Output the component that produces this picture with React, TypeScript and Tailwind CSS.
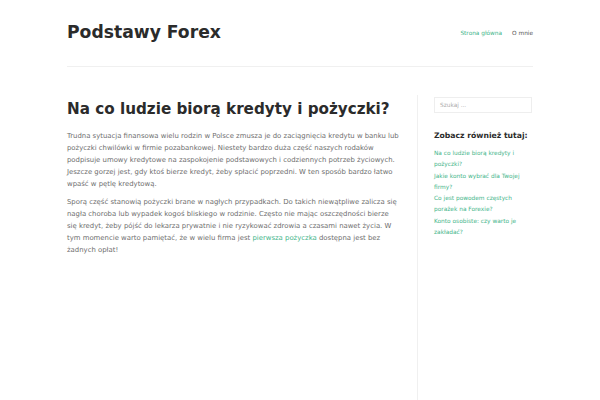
const links = [
  ["Na co ludzie biorą kredyty i", "pożyczki?"],
  ["Jakie konto wybrać dla Twojej", "firmy?"],
  ["Co jest powodem częstych", "porażek na Forexie?"],
  ["Konto osobiste: czy warto je", "zakładać?"],
];

export default function App() {
  return (
    <div className="flex h-screen flex-col bg-white font-['DejaVu_Sans',sans-serif] text-[#6e6e6e]">
      <div className="mx-auto flex w-[466px] flex-1 flex-col">
        <header className="flex h-[67px] shrink-0 items-center justify-between border-b border-[#f0f0f0]">
          <h1 className="text-[17.2px] leading-none font-bold text-[#2b2b2b]">Podstawy Forex</h1>
          <nav className="flex gap-[10px] text-[5.8px]">
            <a className="text-[#3fb58a]">Strona główna</a>
            <a className="text-[#555]">O mnie</a>
          </nav>
        </header>

        <main className="mt-[28px] flex flex-1">
          <article className="w-[334px] shrink-0 pt-[5px]">
            <h2 className="text-[15.2px] leading-[18px] font-bold whitespace-nowrap text-[#2b2b2b]">
              Na co ludzie biorą kredyty i pożyczki?
            </h2>
            <div className="mt-[12px] text-[6.9px] leading-[12px] whitespace-nowrap">
              <p>
                Trudna sytuacja finansowa wielu rodzin w Polsce zmusza je do zaciągnięcia kredytu w banku lub
                <br />
                pożyczki chwilówki w firmie pozabankowej. Niestety bardzo duża część naszych rodaków
                <br />
                podpisuje umowy kredytowe na zaspokojenie podstawowych i codziennych potrzeb życiowych.
                <br />
                Jeszcze gorzej jest, gdy ktoś bierze kredyt, żeby spłacić poprzedni. W ten sposób bardzo łatwo
                <br />
                wpaść w pętlę kredytową.
              </p>
              <p className="mt-[6px]">
                Sporą część stanowią pożyczki brane w nagłych przypadkach. Do takich niewątpliwe zalicza się
                <br />
                nagła choroba lub wypadek kogoś bliskiego w rodzinie. Często nie mając oszczędności bierze
                <br />
                się kredyt, żeby pójść do lekarza prywatnie i nie ryzykować zdrowia a czasami nawet życia. W
                <br />
                tym momencie warto pamiętać, że w wielu firma jest{" "}
                <a className="text-[#3fb58a]">pierwsza pożyczka</a> dostępna jest bez
                <br />
                żadnych opłat!
              </p>
            </div>
          </article>

          <aside className="ml-[16px] flex-1 border-l border-[#f0f0f0] pt-[2px] pl-[16px]">
            <div className="flex h-[16px] w-[98px] items-center border border-[#eee] px-[5px] text-[5.8px] text-[#aaa]">
              Szukaj ...
            </div>
            <h3 className="mt-[18px] text-[7.7px] leading-[10px] font-bold whitespace-nowrap text-[#2b2b2b]">
              Zobacz również tutaj:
            </h3>
            <ul className="mt-[7px] text-[5.85px] leading-[11.3px] whitespace-nowrap text-[#3fb58a]">
              {links.map(([a, b]) => (
                <li key={a}>
                  <a>
                    {a}
                    <br />
                    {b}
                  </a>
                </li>
              ))}
            </ul>
          </aside>
        </main>
      </div>
    </div>
  );
}
